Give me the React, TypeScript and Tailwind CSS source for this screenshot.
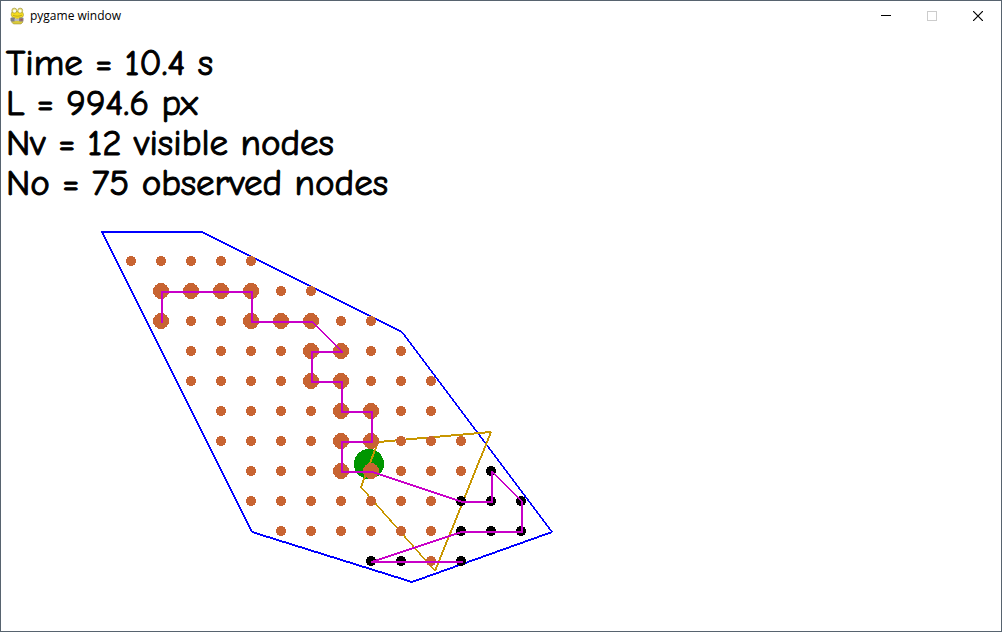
const BROWN = "#c86432";
const MAGENTA = "#c800c8";
const GOLD = "#c89600";

type Point = [number, number];

const outline: Point[] = [
  [102, 202], [202, 202], [402, 302], [552, 502], [412, 552], [252, 502], [102, 202],
];
const view: Point[] = [[378, 412], [491, 402], [435, 541], [361, 457], [378, 412]];
const travelled: Point[] = [
  [162, 292], [162, 262], [252, 262], [252, 292], [312, 292], [342, 322], [312, 322],
  [312, 352], [342, 352], [342, 382], [372, 382], [372, 412], [342, 412], [342, 442], [372, 442],
];
const planned: Point[] = [
  [372, 442], [462, 472], [492, 472], [492, 442], [522, 472], [522, 502], [462, 502],
  [372, 532], [462, 532],
];

// Each row of the grid: y, first x, last x (30 units apart)
const rows: [number, number, number][] = [
  [231, 131, 251], [261, 161, 311], [291, 161, 371], [321, 191, 401], [351, 191, 431],
  [381, 221, 431], [411, 221, 461], [441, 251, 461], [471, 251, 431], [501, 281, 431],
  [531, 431, 431],
];
const observed: Point[] = rows.flatMap(([y, from, to]) =>
  Array.from({ length: (to - from) / 30 + 1 }, (_, i): Point => [from + i * 30, y]),
);
const visited: Point[] = [
  [161, 291], [161, 261], [191, 261], [221, 261], [251, 261], [251, 291], [281, 291],
  [311, 291], [341, 321], [311, 321], [311, 351], [341, 351], [341, 381], [371, 381],
  [371, 411], [341, 411], [341, 441], [371, 441],
];
const hidden: Point[] = [
  [491, 441], [461, 471], [491, 471], [521, 471], [461, 501], [491, 501], [521, 501],
  [371, 531], [401, 531], [461, 531],
];

function Lines({ points, color }: { points: Point[]; color: string }) {
  return (
    <g stroke={color}>
      {points.slice(1).map(([x2, y2], i) => {
        const [x1, y1] = points[i];
        const dx = Math.abs(x2 - x1);
        const dy = Math.abs(y2 - y1);
        const width = (2 * Math.max(dx, dy)) / Math.hypot(dx, dy);
        return (
          <line
            key={i}
            x1={x1}
            y1={y1}
            x2={x2}
            y2={y2}
            strokeWidth={width}
            strokeLinecap={dx && dy ? "butt" : "square"}
          />
        );
      })}
    </g>
  );
}

function Dots({ points, color, r }: { points: Point[]; color: string; r: number }) {
  return (
    <g fill={color}>
      {points.map(([x, y]) => (
        <circle key={`${x}-${y}`} cx={x} cy={y} r={r} />
      ))}
    </g>
  );
}

function SnakeIcon() {
  return (
    <svg viewBox="0 0 16 18" className="h-[18px] w-4 shrink-0" aria-hidden="true">
      <path d="M3.500 13h9.500l1 2-2 2H4.500l-2-2z" fill="#d9c93c" stroke="#94862f" strokeWidth=".5" />
      <path d="M3.200 4.500C1.600 7 2 9.800 4.600 10.800c3 1 7 .8 9-.8 1.500-1.500 1-4-.8-5.500z" fill="#f5dc1e" stroke="#a08e20" strokeWidth=".6" />
      <circle cx="5.300" cy="3.600" r="2.500" fill="#eadf73" stroke="#9a8e3a" strokeWidth=".6" />
      <circle cx="11.200" cy="3.600" r="2.500" fill="#eadf73" stroke="#9a8e3a" strokeWidth=".6" />
      <circle cx="5.500" cy="3.900" r="1.500" fill="#fafaf4" />
      <circle cx="11" cy="3.900" r="1.500" fill="#fafaf4" />
      <path d="M4 8.300c2.500 1.200 6.500 1.200 9-.2" fill="none" stroke="#a8941c" strokeWidth=".7" />
      <rect x="1.500" y="10.500" width="4.500" height="4" rx="1" fill="#808086" />
      <rect x="5.500" y="12" width="5" height="2" fill="#b9b9bc" />
      <rect x="10" y="10.500" width="4.500" height="4" rx="1" fill="#8b8284" />
      <rect x="11.500" y="12" width="2" height="1.500" fill="#a85050" />
    </svg>
  );
}

const stats = ["Time = 10.4 s", "L = 994.6 px", "Nv = 12 visible nodes", "No = 75 observed nodes"];

export default function App() {
  return (
    <div className="flex min-h-screen flex-col border border-[#57636f] bg-white text-black">
      <header className="flex h-[30px] items-center pl-2">
        <SnakeIcon />
        <h1 className="ml-[5px] flex-1 font-['Segoe_UI','Open_Sans',sans-serif] text-[12px] leading-4">
          pygame window
        </h1>
        <button type="button" aria-label="Minimize" className="flex h-full w-[46px] items-center justify-center">
          <svg viewBox="0 0 10 10" className="size-[10px]" shapeRendering="crispEdges">
            <path d="M0 4h10v1H0z" />
          </svg>
        </button>
        <button type="button" aria-label="Maximize" disabled className="flex h-full w-[46px] items-center justify-center">
          <svg viewBox="0 0 10 10" className="size-[10px]" shapeRendering="crispEdges">
            <path d="M.5.5h9v9h-9z" fill="none" stroke="#cccccc" />
          </svg>
        </button>
        <button type="button" aria-label="Close" className="flex h-full w-[46px] items-center justify-center">
          <svg viewBox="0 0 10 10" className="size-[10px]">
            <path d="M0 0l10 10M10 0L0 10" stroke="#000" strokeWidth="1.200" />
          </svg>
        </button>
      </header>
      <main className="grid flex-1 grid-cols-1 grid-rows-1">
        <ul className="z-10 col-start-1 row-start-1 pt-3 pl-[5px] font-['Comic_Sans_MS','Comic_Neue','Open_Sans',sans-serif] text-[37px] leading-10 [-webkit-text-stroke:1px_black]">
          {stats.map((line) => (
            <li key={line}>{line}</li>
          ))}
        </ul>
        <svg
          viewBox="1 1 1000 600"
          preserveAspectRatio="xMinYMin meet"
          className="col-start-1 row-start-1 h-auto w-full"
          shapeRendering="crispEdges"
          role="img"
          aria-label="Explored area with travelled path"
        >
          <Lines points={outline} color="#0000ff" />
          <circle cx="369" cy="434" r="15" fill="#009600" />
          <Lines points={view} color={GOLD} />
          <Dots points={hidden} color="#000000" r={5} />
          <Dots points={observed} color={BROWN} r={5} />
          <Dots points={visited} color={BROWN} r={8} />
          <Lines points={travelled} color={MAGENTA} />
          <Lines points={planned} color={MAGENTA} />
        </svg>
      </main>
    </div>
  );
}
